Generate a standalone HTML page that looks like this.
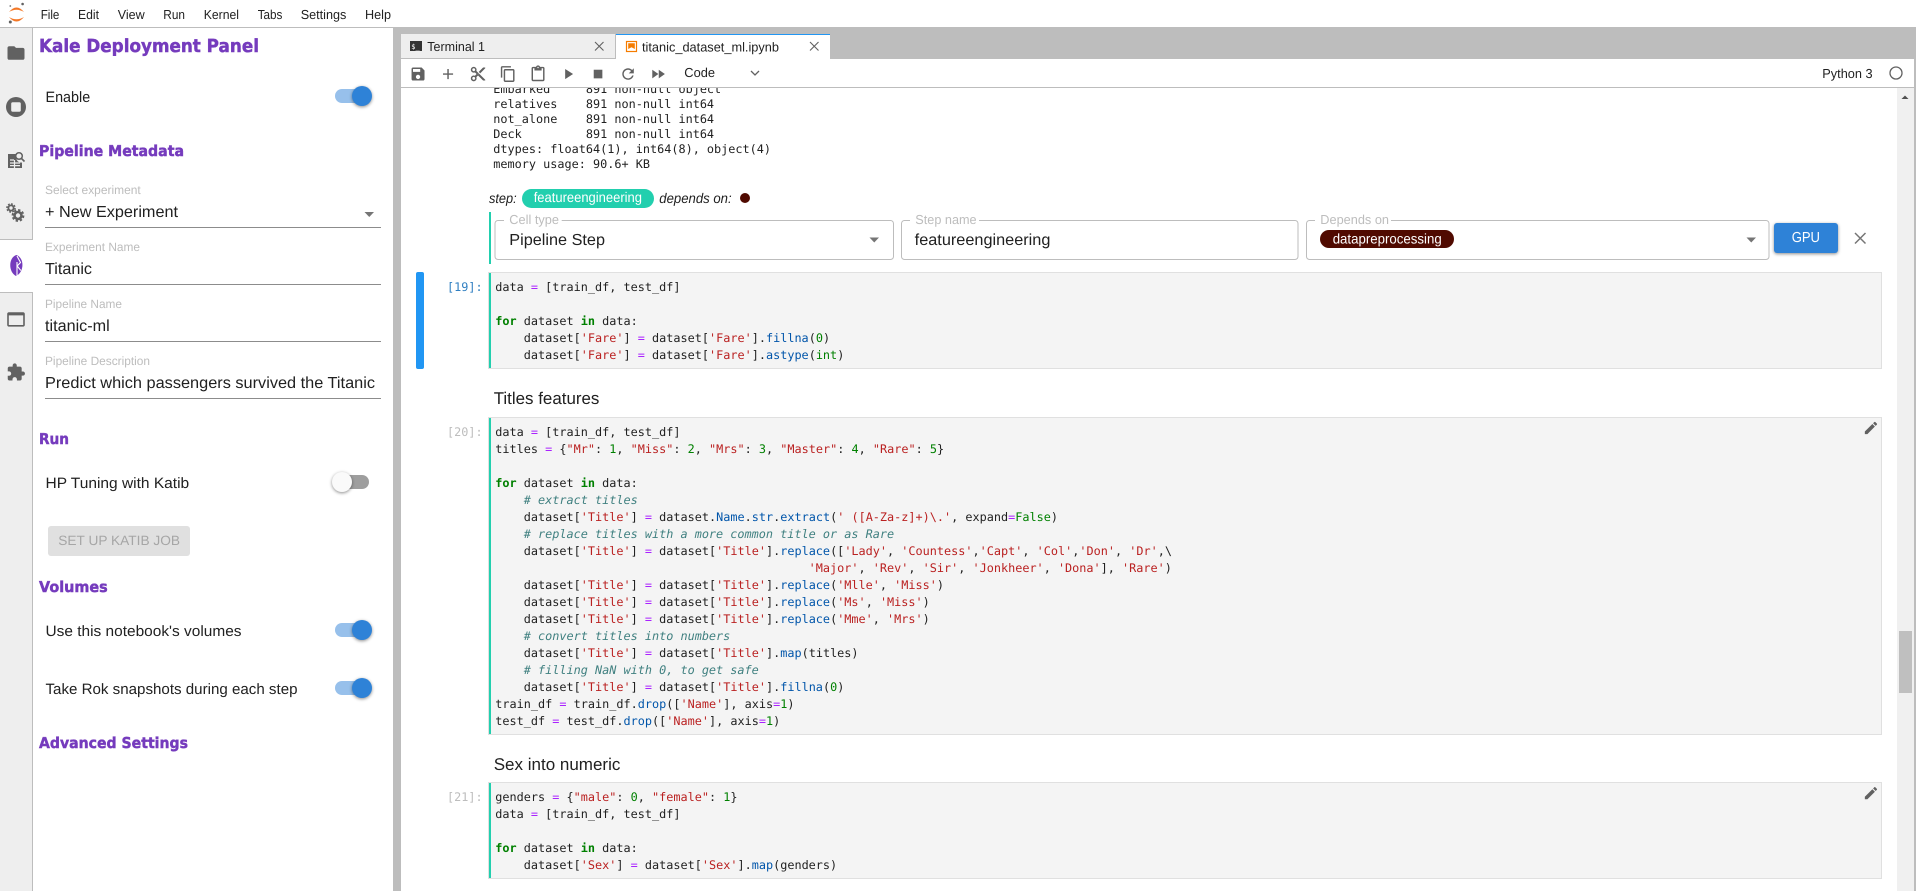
<!DOCTYPE html>
<html><head><meta charset="utf-8"><title>JupyterLab</title>
<style>
html,body{margin:0;padding:0;background:#fff;width:1916px;height:891px;overflow:hidden}
svg{display:block;text-rendering:geometricPrecision}
text{font-family:"Liberation Sans",sans-serif;fill:#212121;white-space:pre}
.h{font-weight:bold;fill:#753bbd;stroke:#753bbd;stroke-width:.45px;font-family:"DejaVu Sans","Liberation Sans",sans-serif}
.m{font-size:13px}
.t{font-size:15px}
.f{font-size:16px}
.l{font-size:12px;fill:#bdbdbd}
.ll{font-size:13px;fill:#bdbdbd}
.i{font-size:14px;font-style:italic}
.w{font-size:14px;fill:#fff}
.md{font-size:17px}
.code text,text.code{font-family:"DejaVu Sans Mono","Liberation Mono",monospace;font-size:11.83px;white-space:pre}
.k{fill:#008000;font-weight:bold}.s{fill:#ba2121}.n{fill:#008000}.o{fill:#aa22ff}.p{fill:#0055aa}
.cm{fill:#408080;font-style:italic}
.sh{filter:drop-shadow(0 1px 1.5px rgba(0,0,0,.45))}
</style></head><body>
<svg xmlns="http://www.w3.org/2000/svg" width="1916" height="891" viewBox="0 0 1916 891">
<!-- top bar -->
<rect width="1916" height="891" fill="#fff"/>
<rect x="0" y="27" width="1916" height="1" fill="#bdbdbd"/>
<path d="M9 12Q16.5 3 24 12Q16.5 7.5 9 12z M9 17Q16.5 26 24 17Q16.5 21.5 9 17z" fill="#f37726"/>
<circle cx="22.6" cy="4" r="1.3" fill="#616161"/><circle cx="10.3" cy="6" r=".9" fill="#767677"/><circle cx="10.3" cy="22" r="1.5" fill="#616161"/>
<text class="m" x="40.7" y="19" textLength="18.7" lengthAdjust="spacingAndGlyphs">File</text>
<text class="m" x="78" y="19" textLength="21" lengthAdjust="spacingAndGlyphs">Edit</text>
<text class="m" x="117.7" y="19" textLength="27" lengthAdjust="spacingAndGlyphs">View</text>
<text class="m" x="163.3" y="19" textLength="21.7" lengthAdjust="spacingAndGlyphs">Run</text>
<text class="m" x="203.7" y="19" textLength="35.3" lengthAdjust="spacingAndGlyphs">Kernel</text>
<text class="m" x="257.7" y="19" textLength="24.7" lengthAdjust="spacingAndGlyphs">Tabs</text>
<text class="m" x="300.7" y="19" textLength="45.7" lengthAdjust="spacingAndGlyphs">Settings</text>
<text class="m" x="365" y="19" textLength="26" lengthAdjust="spacingAndGlyphs">Help</text>

<!-- left sidebar -->
<rect x="0" y="28" width="32" height="863" fill="#eeeeee"/>
<rect x="32" y="28" width="1" height="863" fill="#bdbdbd"/>
<rect x="0" y="239" width="33" height="1" fill="#bdbdbd"/>
<rect x="0" y="240" width="33" height="52" fill="#fff"/>
<rect x="0" y="292" width="33" height="1" fill="#bdbdbd"/>
<path transform="translate(5.8,42.8) scale(.85)" fill="#616161" d="M10 4H4c-1.1 0-2 .9-2 2v12c0 1.1.9 2 2 2h16c1.1 0 2-.9 2-2V8c0-1.1-.9-2-2-2h-8l-2-2z"/>
<circle cx="16" cy="107" r="10" fill="#616161"/><rect x="11.2" y="102.2" width="9.6" height="9.6" rx="1.5" fill="#eee"/>
<!-- property inspector -->
<path fill="#616161" d="M8 154h8.5v5.5a5 5 0 0 0 5.5 3V168H8z"/>
<path stroke="#eee" stroke-width="1.2" d="M10 160h4M10 163h10M10 165.6h10M14.5 160v8" fill="none"/>
<circle cx="19" cy="156" r="3.3" fill="none" stroke="#616161" stroke-width="1.5"/><path d="M21.5 158.5l3 3" stroke="#616161" stroke-width="1.6"/>
<!-- gears -->
<circle cx="11" cy="208" r="2.6" fill="none" stroke="#616161" stroke-width="1.8"/><circle cx="11" cy="208" r="4.1" fill="none" stroke="#616161" stroke-width="1.4" stroke-dasharray="1.9 1.3"/>
<circle cx="18" cy="215.5" r="3.5" fill="none" stroke="#616161" stroke-width="2.6"/><circle cx="18" cy="215.5" r="5.5" fill="none" stroke="#616161" stroke-width="1.8" stroke-dasharray="2.4 1.9"/>
<!-- kale -->
<path fill="#753bbd" d="M16.5 255C8.500 257 8 272 16 276C24.500 272 24.500 258 16.500 255z"/>
<path fill="none" stroke="#fff" stroke-width="1.1" d="M17 256L20.500 262.500L17.200 266L20.800 270.500M17 262V276"/>
<!-- tabs -->
<path transform="translate(6.4,309.800) scale(.8)" fill="#616161" d="M21 3H3c-1.1 0-2 .9-2 2v14c0 1.1.9 2 2 2h18c1.1 0 2-.9 2-2V5c0-1.100-.9-2-2-2zm0 16H3V7h18v12z"/>
<!-- puzzle -->
<path transform="translate(6.100,362.500) scale(.82)" fill="#616161" d="M20.5 11H19V7c0-1.100-.9-2-2-2h-4V3.500C13 2.120 11.880 1 10.500 1S8 2.120 8 3.500V5H4c-1.100 0-1.990.9-1.990 2v3.800H3.500c1.490 0 2.700 1.210 2.700 2.700s-1.210 2.700-2.700 2.700H2V20c0 1.100.9 2 2 2h3.800v-1.500c0-1.490 1.210-2.700 2.700-2.700 1.490 0 2.700 1.210 2.700 2.700V22H17c1.100 0 2-.9 2-2v-4h1.500c1.380 0 2.500-1.120 2.500-2.500S21.880 11 20.500 11z"/>

<!-- kale panel -->
<text class="h" x="39" y="52" font-size="18" textLength="220" lengthAdjust="spacingAndGlyphs">Kale Deployment Panel</text>
<text class="t" x="45.500" y="102" textLength="44.700" lengthAdjust="spacingAndGlyphs">Enable</text>
<rect x="335" y="89" width="33" height="14" rx="7" fill="#97c0eb"/><circle class="sh" cx="362" cy="96" r="10" fill="#2e82d7"/>
<text class="h" x="39" y="156" font-size="15" textLength="145" lengthAdjust="spacingAndGlyphs">Pipeline Metadata</text>
<text class="l" x="45" y="194" textLength="95.700" lengthAdjust="spacingAndGlyphs">Select experiment</text>
<text class="f" x="45" y="217" textLength="133" lengthAdjust="spacingAndGlyphs">+ New Experiment</text>
<path d="M364.500 212h9.500l-4.750 5z" fill="#757575"/>
<rect x="45" y="227" width="336" height="1" fill="#8c8c8c"/>
<text class="l" x="45" y="251" textLength="95" lengthAdjust="spacingAndGlyphs">Experiment Name</text>
<text class="f" x="45" y="274" textLength="47" lengthAdjust="spacingAndGlyphs">Titanic</text>
<rect x="45" y="284" width="336" height="1" fill="#8c8c8c"/>
<text class="l" x="45" y="308" textLength="77" lengthAdjust="spacingAndGlyphs">Pipeline Name</text>
<text class="f" x="45" y="331" textLength="64.700" lengthAdjust="spacingAndGlyphs">titanic-ml</text>
<rect x="45" y="341" width="336" height="1" fill="#8c8c8c"/>
<text class="l" x="45" y="365" textLength="105" lengthAdjust="spacingAndGlyphs">Pipeline Description</text>
<text class="f" x="45" y="388" textLength="330" lengthAdjust="spacingAndGlyphs">Predict which passengers survived the Titanic</text>
<rect x="45" y="398" width="336" height="1" fill="#8c8c8c"/>
<text class="h" x="39" y="444" font-size="15" textLength="30" lengthAdjust="spacingAndGlyphs">Run</text>
<text class="t" x="45.500" y="488" textLength="143.700" lengthAdjust="spacingAndGlyphs">HP Tuning with Katib</text>
<rect x="336" y="475" width="33" height="14" rx="7" fill="#9e9e9e"/><circle class="sh" cx="342" cy="482" r="10" fill="#fafafa"/>
<rect x="48" y="526" width="142" height="30" rx="3" fill="#e0e0e0"/>
<text x="58.300" y="545" font-size="13.500" style="fill:#a6a6a6" textLength="121.700" lengthAdjust="spacingAndGlyphs">SET UP KATIB JOB</text>
<text class="h" x="39" y="592" font-size="15" textLength="68.700" lengthAdjust="spacingAndGlyphs">Volumes</text>
<text class="t" x="45.500" y="636" textLength="196" lengthAdjust="spacingAndGlyphs">Use this notebook's volumes</text>
<rect x="335" y="623" width="33" height="14" rx="7" fill="#97c0eb"/><circle class="sh" cx="362" cy="630" r="10" fill="#2e82d7"/>
<text class="t" x="45.500" y="694" textLength="252" lengthAdjust="spacingAndGlyphs">Take Rok snapshots during each step</text>
<rect x="335" y="681" width="33" height="14" rx="7" fill="#97c0eb"/><circle class="sh" cx="362" cy="688" r="10" fill="#2e82d7"/>
<text class="h" x="39" y="748" font-size="15" textLength="149" lengthAdjust="spacingAndGlyphs">Advanced Settings</text>

<!-- splitter -->
<rect x="393" y="28" width="8" height="863" fill="#bdbdbd"/>

<!-- notebook: output -->
<g class="code" transform="translate(493.300,0)">
<text y="93">Embarked     891 non-null object</text>
<text y="108">relatives    891 non-null int64</text>
<text y="123">not_alone    891 non-null int64</text>
<text y="138">Deck         891 non-null int64</text>
<text y="153">dtypes: float64(1), int64(8), object(4)</text>
<text y="168">memory usage: 90.6+ KB</text>
</g>

<!-- tab bar + toolbar -->
<rect x="401" y="28" width="1515" height="31" fill="#bdbdbd"/>
<rect x="401" y="59" width="1513" height="28" fill="#fff"/>
<rect x="401" y="87" width="1513" height="1" fill="#bdbdbd"/>
<rect x="1914" y="59" width="2" height="832" fill="#bdbdbd"/>
<rect x="401" y="34" width="214" height="24" fill="#eeeeee"/>
<rect x="401" y="58" width="215" height="1" fill="#bdbdbd"/>
<rect x="615" y="34" width="1" height="25" fill="#bdbdbd"/>
<rect x="616" y="34" width="214" height="25" fill="#fff"/>
<rect x="616" y="34" width="214" height="1" fill="#2196f3"/>
<rect x="410" y="41" width="12" height="10" fill="#333"/>
<text x="411.300" y="49" font-size="7" style="fill:#fff;font-family:'DejaVu Sans Mono',monospace">$_</text>
<text class="m" x="427.300" y="51" textLength="57.700" lengthAdjust="spacingAndGlyphs">Terminal 1</text>
<path d="M595 42l8.500 8.500M603.500 42L595 50.500" stroke="#616161" stroke-width="1.100" fill="none"/>
<rect x="626.500" y="41.500" width="10" height="10" fill="#fff" stroke="#f57c00" stroke-width="1.200"/>
<path d="M628.200 43.200h6.600v5.800l-3.300-1.700-3.300 1.700z" fill="#f57c00"/>
<text class="m" x="642" y="51.500" textLength="137" lengthAdjust="spacingAndGlyphs">titanic_dataset_ml.ipynb</text>
<path d="M810 42l8.500 8.500M818.500 42L810 50.500" stroke="#616161" stroke-width="1.100" fill="none"/>
<g fill="#616161">
<path transform="translate(409.400,65.400) scale(.72)" d="M17 3H5c-1.110 0-2 .9-2 2v14c0 1.100.89 2 2 2h14c1.100 0 2-.9 2-2V7l-4-4zm-5 16c-1.660 0-3-1.340-3-3s1.340-3 3-3 3 1.340 3 3-1.340 3-3 3zm3-10H5V5h10v4z"/>
<path transform="translate(439.400,65.400) scale(.72)" d="M19 13h-6v6h-2v-6H5v-2h6V5h2v6h6v2z"/>
<path transform="translate(469.400,65.400) scale(.72)" d="M9.640 7.640c.23-.5.36-1.050.36-1.640 0-2.210-1.790-4-4-4S2 3.790 2 6s1.790 4 4 4c.59 0 1.140-.13 1.640-.36L10 12l-2.360 2.360C7.140 14.130 6.590 14 6 14c-2.210 0-4 1.790-4 4s1.790 4 4 4 4-1.790 4-4c0-.59-.13-1.140-.36-1.640L12 14l7 7h3v-1L9.640 7.640zM6 8c-1.100 0-2-.89-2-2s.9-2 2-2 2 .89 2 2-.9 2-2 2zm0 12c-1.100 0-2-.89-2-2s.9-2 2-2 2 .89 2 2-.9 2-2 2zm6-7.500c-.28 0-.5-.22-.5-.5s.22-.5.5-.5.5.22.5.5-.22.5-.5.5zM19 3l-6 6 2 2 7-7V3z"/>
<path transform="translate(499.400,65.400) scale(.72)" d="M16 1H4c-1.100 0-2 .9-2 2v14h2V3h12V1zm3 4H8c-1.100 0-2 .9-2 2v14c0 1.100.9 2 2 2h11c1.100 0 2-.9 2-2V7c0-1.100-.9-2-2-2zm0 16H8V7h11v14z"/>
<path transform="translate(529.400,65.400) scale(.72)" d="M19 2h-4.180C14.400.84 13.300 0 12 0c-1.300 0-2.400.84-2.820 2H5c-1.100 0-2 .9-2 2v16c0 1.100.9 2 2 2h14c1.100 0 2-.9 2-2V4c0-1.100-.9-2-2-2zm-7 0c.55 0 1 .45 1 1s-.45 1-1 1-1-.45-1-1 .45-1 1-1zm7 18H5V4h2v3h10V4h2v16z"/>
<path transform="translate(559.400,65.400) scale(.72)" d="M8 5v14l11-7z"/>
<path transform="translate(589.400,65.400) scale(.72)" d="M6 6h12v12H6z"/>
<path transform="translate(619.400,65.400) scale(.72)" d="M17.650 6.350C16.200 4.900 14.210 4 12 4c-4.420 0-7.990 3.580-7.990 8s3.570 8 7.990 8c3.730 0 6.840-2.550 7.730-6h-2.080c-.82 2.330-3.040 4-5.650 4-3.310 0-6-2.690-6-6s2.690-6 6-6c1.660 0 3.140.69 4.220 1.780L13 11h7V4l-2.350 2.350z"/>
<path transform="translate(649.400,65.400) scale(.72)" d="M4 18l8.500-6L4 6v12zm9-12v12l8.500-6L13 6z"/>
</g>
<text class="m" x="684.300" y="77" textLength="30.700" lengthAdjust="spacingAndGlyphs">Code</text>
<path d="M751 71l4 4 4-4" fill="none" stroke="#616161" stroke-width="1.300"/>
<text class="m" x="1822.300" y="78" textLength="50.300" lengthAdjust="spacingAndGlyphs">Python 3</text>
<circle cx="1896" cy="73" r="6" fill="none" stroke="#616161" stroke-width="1.300"/>

<!-- scrollbar -->
<rect x="1897" y="88" width="17" height="803" fill="#f0f0f0"/>
<path d="M1901.500 99l3.500-3.500 3.500 3.500z" fill="#505050"/>
<rect x="1899" y="631" width="13" height="62" fill="#bfbfbf"/>

<!-- step row -->
<text class="i" x="489" y="203" textLength="27.700" lengthAdjust="spacingAndGlyphs">step:</text>
<rect x="522" y="189" width="132" height="19" rx="9.500" fill="#22cfae"/>
<text class="w" x="533.700" y="202" textLength="108.300" lengthAdjust="spacingAndGlyphs">featureengineering</text>
<text class="i" x="659.300" y="203" textLength="72.300" lengthAdjust="spacingAndGlyphs">depends on:</text>
<circle cx="745" cy="198" r="5" fill="#500a00"/>
<rect x="489" y="212" width="2" height="52" fill="#22cfae"/>

<!-- form fields -->
<g fill="none" stroke="#bdbdbd" stroke-width="1">
<path d="M504 220.500H498a3 3 0 0 0-3 3V256.500a3 3 0 0 0 3 3H890.500a3 3 0 0 0 3-3V223.500a3 3 0 0 0-3-3H561.700"/>
<path d="M910 220.500H904.500a3 3 0 0 0-3 3V256.500a3 3 0 0 0 3 3H1295a3 3 0 0 0 3-3V223.500a3 3 0 0 0-3-3H979"/>
<path d="M1315 220.500H1309.500a3 3 0 0 0-3 3V256.500a3 3 0 0 0 3 3H1766a3 3 0 0 0 3-3V223.500a3 3 0 0 0-3-3H1391"/>
</g>
<text class="ll" x="509.300" y="224" textLength="49.700" lengthAdjust="spacingAndGlyphs">Cell type</text>
<text class="f" x="509.300" y="245" textLength="95.700" lengthAdjust="spacingAndGlyphs">Pipeline Step</text>
<path d="M869.500 237.500h9.500l-4.750 5z" fill="#757575"/>
<text class="ll" x="915.300" y="224" textLength="61.300" lengthAdjust="spacingAndGlyphs">Step name</text>
<text class="f" x="914.700" y="245" textLength="135.700" lengthAdjust="spacingAndGlyphs">featureengineering</text>
<text class="ll" x="1320.300" y="224" textLength="68.700" lengthAdjust="spacingAndGlyphs">Depends on</text>
<rect x="1320" y="230" width="134" height="18" rx="9" fill="#500a00"/>
<text class="w" x="1332.700" y="243.300" textLength="109" lengthAdjust="spacingAndGlyphs">datapreprocessing</text>
<path d="M1746.500 237.500h9.500l-4.750 5z" fill="#757575"/>
<rect class="sh" x="1774" y="223" width="64" height="30" rx="3" fill="#2e82d7"/>
<text x="1791.700" y="242" font-size="14.500" style="fill:#fff" textLength="28.300" lengthAdjust="spacingAndGlyphs">GPU</text>
<path d="M1855 233l10.500 10.500M1865.500 233L1855 243.500" stroke="#757575" stroke-width="1.500" fill="none"/>

<!-- cell boxes -->
<rect x="416" y="272" width="8" height="97" rx="2" fill="#2196f3"/>
<rect x="488.500" y="272.500" width="1393" height="96" fill="#f4f4f4" stroke="#e0e0e0"/>
<rect x="489" y="273" width="2" height="95" fill="#22cfae"/>
<rect x="488.500" y="417.500" width="1393" height="317" fill="#f4f4f4" stroke="#e0e0e0"/>
<rect x="489" y="418" width="2" height="316" fill="#22cfae"/>
<rect x="488.500" y="782.500" width="1393" height="96" fill="#f4f4f4" stroke="#e0e0e0"/>
<rect x="489" y="783" width="2" height="95" fill="#22cfae"/>

<path transform="translate(1862.800,419.800) scale(.68)" fill="#616161" d="M3 17.250V21h3.750L17.810 9.940l-3.750-3.750L3 17.250zM20.710 7.040c.39-.39.39-1.020 0-1.410l-2.340-2.340c-.39-.39-1.020-.39-1.410 0l-1.830 1.830 3.750 3.750 1.830-1.830z"/>
<path transform="translate(1862.800,785) scale(.68)" fill="#616161" d="M3 17.250V21h3.750L17.810 9.940l-3.750-3.750L3 17.250zM20.710 7.040c.39-.39.39-1.020 0-1.410l-2.340-2.340c-.39-.39-1.020-.39-1.410 0l-1.830 1.830 3.750 3.750 1.830-1.830z"/>

<text class="code" x="447" y="291" style="fill:#307fc1">[19]:</text>
<text class="code" x="447" y="436" style="fill:#bdbdbd">[20]:</text>
<text class="code" x="447" y="801" style="fill:#bdbdbd">[21]:</text>

<text class="md" x="493.700" y="404" textLength="105.700" lengthAdjust="spacingAndGlyphs">Titles features</text>
<text class="md" x="493.700" y="770" textLength="126.700" lengthAdjust="spacingAndGlyphs">Sex into numeric</text>

<g class="code" transform="translate(495.300,0)">
<!-- cell 19 -->
<text y="291">data <tspan class="o">=</tspan> [train_df, test_df]</text>
<text y="325"><tspan class="k">for</tspan> dataset <tspan class="k">in</tspan> data:</text>
<text y="342">    dataset[<tspan class="s">'Fare'</tspan>] <tspan class="o">=</tspan> dataset[<tspan class="s">'Fare'</tspan>].<tspan class="p">fillna</tspan>(<tspan class="n">0</tspan>)</text>
<text y="359">    dataset[<tspan class="s">'Fare'</tspan>] <tspan class="o">=</tspan> dataset[<tspan class="s">'Fare'</tspan>].<tspan class="p">astype</tspan>(<tspan class="n">int</tspan>)</text>
<!-- cell 20 -->
<text y="436">data <tspan class="o">=</tspan> [train_df, test_df]</text>
<text y="453">titles <tspan class="o">=</tspan> {<tspan class="s">"Mr"</tspan>: <tspan class="n">1</tspan>, <tspan class="s">"Miss"</tspan>: <tspan class="n">2</tspan>, <tspan class="s">"Mrs"</tspan>: <tspan class="n">3</tspan>, <tspan class="s">"Master"</tspan>: <tspan class="n">4</tspan>, <tspan class="s">"Rare"</tspan>: <tspan class="n">5</tspan>}</text>
<text y="487"><tspan class="k">for</tspan> dataset <tspan class="k">in</tspan> data:</text>
<text y="504" class="cm">    # extract titles</text>
<text y="521">    dataset[<tspan class="s">'Title'</tspan>] <tspan class="o">=</tspan> dataset.<tspan class="p">Name</tspan>.<tspan class="p">str</tspan>.<tspan class="p">extract</tspan>(<tspan class="s">' ([A-Za-z]+)\.'</tspan>, expand<tspan class="o">=</tspan><tspan class="n">False</tspan>)</text>
<text y="538" class="cm">    # replace titles with a more common title or as Rare</text>
<text y="555">    dataset[<tspan class="s">'Title'</tspan>] <tspan class="o">=</tspan> dataset[<tspan class="s">'Title'</tspan>].<tspan class="p">replace</tspan>([<tspan class="s">'Lady'</tspan>, <tspan class="s">'Countess'</tspan>,<tspan class="s">'Capt'</tspan>, <tspan class="s">'Col'</tspan>,<tspan class="s">'Don'</tspan>, <tspan class="s">'Dr'</tspan>,\</text>
<text y="572">                                            <tspan class="s">'Major'</tspan>, <tspan class="s">'Rev'</tspan>, <tspan class="s">'Sir'</tspan>, <tspan class="s">'Jonkheer'</tspan>, <tspan class="s">'Dona'</tspan>], <tspan class="s">'Rare'</tspan>)</text>
<text y="589">    dataset[<tspan class="s">'Title'</tspan>] <tspan class="o">=</tspan> dataset[<tspan class="s">'Title'</tspan>].<tspan class="p">replace</tspan>(<tspan class="s">'Mlle'</tspan>, <tspan class="s">'Miss'</tspan>)</text>
<text y="606">    dataset[<tspan class="s">'Title'</tspan>] <tspan class="o">=</tspan> dataset[<tspan class="s">'Title'</tspan>].<tspan class="p">replace</tspan>(<tspan class="s">'Ms'</tspan>, <tspan class="s">'Miss'</tspan>)</text>
<text y="623">    dataset[<tspan class="s">'Title'</tspan>] <tspan class="o">=</tspan> dataset[<tspan class="s">'Title'</tspan>].<tspan class="p">replace</tspan>(<tspan class="s">'Mme'</tspan>, <tspan class="s">'Mrs'</tspan>)</text>
<text y="640" class="cm">    # convert titles into numbers</text>
<text y="657">    dataset[<tspan class="s">'Title'</tspan>] <tspan class="o">=</tspan> dataset[<tspan class="s">'Title'</tspan>].<tspan class="p">map</tspan>(titles)</text>
<text y="674" class="cm">    # filling NaN with 0, to get safe</text>
<text y="691">    dataset[<tspan class="s">'Title'</tspan>] <tspan class="o">=</tspan> dataset[<tspan class="s">'Title'</tspan>].<tspan class="p">fillna</tspan>(<tspan class="n">0</tspan>)</text>
<text y="708">train_df <tspan class="o">=</tspan> train_df.<tspan class="p">drop</tspan>([<tspan class="s">'Name'</tspan>], axis<tspan class="o">=</tspan><tspan class="n">1</tspan>)</text>
<text y="725">test_df <tspan class="o">=</tspan> test_df.<tspan class="p">drop</tspan>([<tspan class="s">'Name'</tspan>], axis<tspan class="o">=</tspan><tspan class="n">1</tspan>)</text>
<!-- cell 21 -->
<text y="801">genders <tspan class="o">=</tspan> {<tspan class="s">"male"</tspan>: <tspan class="n">0</tspan>, <tspan class="s">"female"</tspan>: <tspan class="n">1</tspan>}</text>
<text y="818">data <tspan class="o">=</tspan> [train_df, test_df]</text>
<text y="852"><tspan class="k">for</tspan> dataset <tspan class="k">in</tspan> data:</text>
<text y="869">    dataset[<tspan class="s">'Sex'</tspan>] <tspan class="o">=</tspan> dataset[<tspan class="s">'Sex'</tspan>].<tspan class="p">map</tspan>(genders)</text>
</g>
</svg>
</body></html>
